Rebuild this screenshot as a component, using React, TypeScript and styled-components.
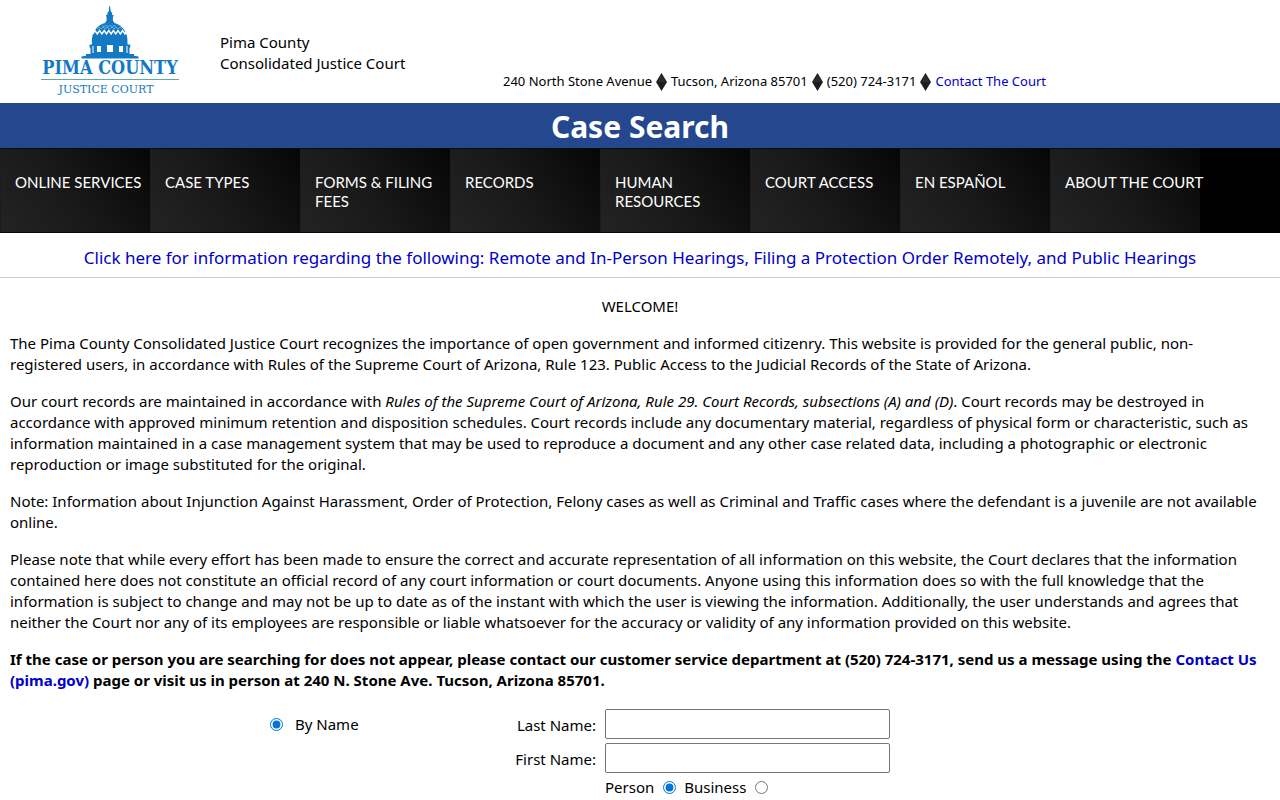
import React, { useState } from "react";
import styled, { createGlobalStyle } from "styled-components";

const GlobalStyle = createGlobalStyle`
  *, *::before, *::after { box-sizing: border-box; }
  body {
    margin: 0;
    background: #fff;
    color: #000;
    font-family: "Noto Sans", "Open Sans", sans-serif;
    font-size: 15px;
    line-height: 21px;
  }
  a { color: #0000cc; text-decoration: none; }
`;

const Header = styled.header`
  display: flex;
  height: 103px;
  padding-left: 40px;
`;

const Logo = styled.svg`
  width: 140px;
  height: 98px;
  flex: none;
`;

const CourtName = styled.div`
  width: 283px;
  margin-left: 40px;
  padding-top: 32px;
  flex: none;
`;

const Contact = styled.address`
  display: flex;
  align-items: center;
  align-self: flex-start;
  gap: 4px;
  margin-top: 71px;
  font-size: 13px;
  font-style: normal;
  white-space: nowrap;
`;

const Diamond = styled.svg`
  width: 11px;
  height: 18px;
  flex: none;
`;

const TitleBar = styled.h1`
  margin: 0;
  height: 45px;
  background: #24478e;
  color: #fff;
  font-size: 30px;
  font-weight: 700;
  line-height: 47px;
  text-align: center;
`;

const Nav = styled.nav`
  display: flex;
  height: 85px;
  background: #000;
`;

const NavItem = styled.a<{ $oneLine: boolean }>`
  width: 150px;
  flex: none;
  padding: 24px 0 0 14px;
  border: 1px solid #0b0b0b;
  border-left-color: #1c1c1c;
  border-right: 0;
  background: linear-gradient(55deg, #232323 0%, #191919 45%, #060606 100%);
  font-family: Lato, sans-serif;
  font-size: 15px;
  line-height: 19px;
  white-space: ${(p) => (p.$oneLine ? "nowrap" : "normal")};

  && { color: #fff; }
`;

const Notice = styled.div`
  height: 45px;
  border-bottom: 1px solid #ccc;
  font-size: 17px;
  line-height: 49px;
  text-align: center;
`;

const Main = styled.main`
  padding: 18px 10px 0;
`;

const Paragraph = styled.p<{ $center?: boolean; $bold?: boolean }>`
  margin: 0 0 16px;
  text-align: ${(p) => (p.$center ? "center" : "left")};
  font-weight: ${(p) => (p.$bold ? 700 : 400)};
`;

const SearchForm = styled.form`
  display: grid;
  grid-template-columns: 237px 80px 285px;
  column-gap: 9px;
  row-gap: 4px;
  align-items: center;
  justify-content: center;
  padding: 2px 120px 0 0;
`;

const FieldLabel = styled.label`
  justify-self: end;
  padding-top: 2px;
  white-space: nowrap;
`;

const TextInput = styled.input`
  width: 100%;
  height: 30px;
  border: 1px solid #767676;
  border-radius: 2px;
  padding: 1px 6px;
  font: inherit;
`;

const Choice = styled.label<{ $gap: number }>`
  display: flex;
  align-items: center;
  gap: ${(p) => p.$gap}px;
`;

const Radio = styled.input`
  width: 13px;
  height: 13px;
  margin: 0;
  accent-color: #0075d7;
`;

const PartyKind = styled.div`
  display: flex;
  grid-column: 3;
  gap: 8px;
`;

const Separator = () => (
  <Diamond viewBox="0 0 11 18" aria-hidden="true">
    <path d="M5.5 0 11 9 5.5 18 0 9Z" fill="#1d1d1f" />
    <path d="M5.5 2 10 9H1Z" fill="#2c2c2f" />
  </Diamond>
);

const navItems = [
  "ONLINE SERVICES",
  "CASE TYPES",
  "FORMS & FILING FEES",
  "RECORDS",
  "HUMAN RESOURCES",
  "COURT ACCESS",
  "EN ESPAÑOL",
  "ABOUT THE COURT",
];

const CourtLogo = () => (
  <Logo viewBox="0 0 140 98" role="img" aria-label="Pima County Justice Court">
    <g fill="#1479c4">
      <path d="M69.300 6h.8l.5 5 1.500 2v2h1.400v1.500h-.6v4l1.600 2.500H65l1.600-2.500v-4H66V15h1.400v-2l1.500-2Z" />
      <path d="M52 43C51 31 59 22.500 69.700 22.500S88.500 31 87.500 43v3H52Z" />
      <path d="M49.500 44.500h40.800V47l-.8 1v7h-39v-7l-1-1Z" />
      <path d="M46 54h48v1.800l4.500.7v2h-57v-2l4.500-.7Z" />
    </g>
    <path d="M53 34l2-3.500 2.300 3.500 2.300-3.500 2.300 3.500 2.300-3.500 2.300 3.500 2.300-3.500 2.300 3.500 2.300-3.500 2.300 3.500 2.300-3.500 2.300 3.500 2.300-3.500 2.300 3.500 2-3" fill="none" stroke="#fff" strokeWidth="1.400" />
    <path d="M57 29l2-2 2 2 2-2 2 2 2-2 2.500 2 2.500-2 2 2 2-2 2 2 2-2 2 2M62 25.500l2 1 2-1 2 1 2-1 2 1 2-1 2 1" fill="none" stroke="#7fb8e2" strokeWidth=".8" />
    <g fill="#fff">
      <path d="M57 46h4v6h-4zM67 45h6v7h-6zM79 46h4v6h-4z" />
      <path d="M52.500 46h1v7h-1zM86.500 46h1v7h-1z" />
    </g>
    <text x="70" y="74" textAnchor="middle" fontFamily="'DejaVu Serif Condensed', 'DejaVu Serif', serif" fontWeight="700" fontSize="18" fill="#1479c4">PIMA COUNTY</text>
    <path d="M1 79.500h138" stroke="#5fa9a8" strokeWidth="1" />
    <text x="66" y="93" textAnchor="middle" fontFamily="'DejaVu Serif', serif" fontSize="11" fill="#1479c4">JUSTICE COURT</text>
  </Logo>
);

export default function App() {
  const [kind, setKind] = useState("person");
  return (
    <>
      <GlobalStyle />
      <Header>
        <CourtLogo />
        <CourtName>
          Pima County
          <br />
          Consolidated Justice Court
        </CourtName>
        <Contact>
          <span>240 North Stone Avenue</span>
          <Separator />
          <span>Tucson, Arizona 85701</span>
          <Separator />
          <span>(520) 724-3171</span>
          <Separator />
          <a href="#contact">Contact The Court</a>
        </Contact>
      </Header>
      <TitleBar>Case Search</TitleBar>
      <Nav>
        {navItems.map((item) => (
          <NavItem href="#menu" key={item} $oneLine={item === "ABOUT THE COURT"}>{item}</NavItem>
        ))}
      </Nav>
      <Notice>
        <a href="#hearings">
          Click here for information regarding the following: Remote and In-Person Hearings, Filing a Protection Order Remotely, and Public Hearings
        </a>
      </Notice>
      <Main>
        <Paragraph $center>WELCOME!</Paragraph>
        <Paragraph>
          The Pima County Consolidated Justice Court recognizes the importance of open government and informed citizenry. This website is provided for the general public, non-<br />registered users, in accordance with Rules of the Supreme Court of Arizona, Rule 123. Public Access to the Judicial Records of the State of Arizona.
        </Paragraph>
        <Paragraph>
          Our court records are maintained in accordance with <em>Rules of the Supreme Court of Arizona, Rule 29. Court Records, subsections (A) and (D)</em>. Court records may be destroyed in accordance with approved minimum retention and disposition schedules. Court records include any documentary material, regardless of physical form or characteristic, such as information maintained in a case management system that may be used to reproduce a document and any other case related data, including a photographic or electronic reproduction or image substituted for the original.
        </Paragraph>
        <Paragraph>
          Note: Information about Injunction Against Harassment, Order of Protection, Felony cases as well as Criminal and Traffic cases where the defendant is a juvenile are not available online.
        </Paragraph>
        <Paragraph>
          Please note that while every effort has been made to ensure the correct and accurate representation of all information on this website, the Court declares that the information contained here does not constitute an official record of any court information or court documents. Anyone using this information does so with the full knowledge that the information is subject to change and may not be up to date as of the instant with which the user is viewing the information. Additionally, the user understands and agrees that neither the Court nor any of its employees are responsible or liable whatsoever for the accuracy or validity of any information provided on this website.
        </Paragraph>
        <Paragraph $bold>
          If the case or person you are searching for does not appear, please contact our customer service department at (520) 724-3171, send us a message using the <a href="#contact-us">Contact Us (pima.gov)</a> page or visit us in person at 240 N. Stone Ave. Tucson, Arizona 85701.
        </Paragraph>
        <SearchForm>
          <Choice $gap={12}>
            <Radio type="radio" name="mode" defaultChecked />
            By Name
          </Choice>
          <FieldLabel htmlFor="last-name">Last Name:</FieldLabel>
          <TextInput id="last-name" type="text" />
          <span />
          <FieldLabel htmlFor="first-name">First Name:</FieldLabel>
          <TextInput id="first-name" type="text" />
          <PartyKind>
            <Choice $gap={9}>
              Person
              <Radio type="radio" name="kind" checked={kind === "person"} onChange={() => setKind("person")} />
            </Choice>
            <Choice $gap={9}>
              Business
              <Radio type="radio" name="kind" checked={kind === "business"} onChange={() => setKind("business")} />
            </Choice>
          </PartyKind>
        </SearchForm>
      </Main>
    </>
  );
}
